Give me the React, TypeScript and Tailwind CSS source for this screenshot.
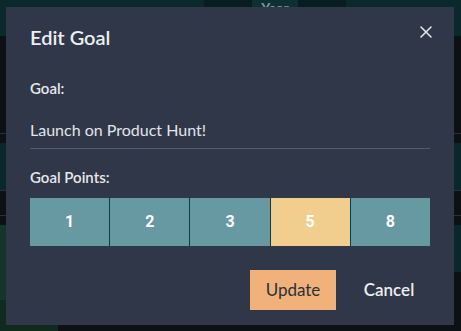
import React from "react";

export default function App() {
  const points = [1, 2, 3, 5, 8];
  const selected = 5;
  return (
    <div className="relative w-[461px] h-[331px] overflow-hidden bg-[#0d1015]" style={{ fontFamily: "Lato, 'Noto Sans', sans-serif" }}>
      {/* background app (dimmed) */}
      <div className="flex flex-col h-full">
        <div className="h-[36px] bg-[#0b292d] flex pl-[204px]">
          <div className="flex h-[20px]">
            <div className="w-[48px] bg-[#081d20] flex items-end justify-end pr-2 text-[#3f6066] text-[12px] leading-none">‹</div>
            <div className="w-[46px] bg-[#0e3035] flex items-start justify-center text-[#7f989c] font-bold text-[14px] leading-[14px] pt-[1px]">Year</div>
            <div className="w-[48px] bg-[#081d20] flex items-end pl-2 text-[#3f6066] text-[12px] leading-none">›</div>
          </div>
        </div>
        <div className="h-[97px]" />
        <div className="h-px bg-[#2a3036]" />
        <div className="h-[9px]" />
        <div className="h-[47px] bg-[#0a272b]" />
        <div className="h-px bg-[#2a3036]" />
        <div className="h-[24px]" />
        <div className="h-px bg-[#2a3036]" />
        <div className="h-[9px]" />
        <div className="flex h-[75px]">
          <div className="w-[60px] bg-[#15352a]" />
          <div className="flex-1" />
          <div className="w-[60px] h-[47px] bg-[#0a272b]" />
        </div>
        <div className="flex flex-1">
          <div className="w-[58px] bg-[#112a20]" />
        </div>
      </div>

      {/* modal */}
      <div className="absolute left-[6px] top-[7px] w-[448px] h-[318px] bg-[#2f3748] px-[24px] pt-[15px]">
        <div className="flex items-start justify-between">
          <h2 className="text-[20px] font-semibold text-[#eceef1] leading-[26px] mt-[2px]">Edit Goal</h2>
          <svg width="12" height="12" viewBox="0 0 12 12" className="mt-[4px] mr-[-2px]" fill="none" stroke="#e8eaee" strokeWidth="1.5" strokeLinecap="round">
            <path d="M1 1 L11 11 M11 1 L1 11" />
          </svg>
        </div>
        <div className="mt-[28px] text-[15px] font-semibold text-[#e6e8ec] leading-[20px]">Goal:</div>
        <div className="mt-[22px] text-[16px] text-[#e3e5e9] leading-[20px] pb-[8px] border-b border-[#535b69]">Launch on Product Hunt!</div>
        <div className="mt-[18px] text-[15px] font-semibold text-[#e6e8ec] leading-[20px]">Goal Points:</div>
        <div className="mt-[11px] flex h-[48px]">
          {points.map((p, i) => (
            <div
              key={p}
              className={`flex-1 flex items-center justify-center text-[16px] font-bold text-white ${i > 0 ? "border-l border-[#0b3d48]" : ""} ${p === selected ? "bg-[#f1cd8e]" : "bg-[#6799a2]"}`}
              style={{ fontFamily: "Roboto, sans-serif" }}
            >
              {p}
            </div>
          ))}
        </div>
        <div className="mt-[24px] flex justify-end items-center">
          <button className="w-[86px] h-[40px] bg-[#f0b27a] text-[#2b303b] text-[17px]">Update</button>
          <button className="w-[106px] h-[40px] -mr-[12px] text-[17px] font-semibold text-[#eceef1]">Cancel</button>
        </div>
      </div>
    </div>
  );
}
